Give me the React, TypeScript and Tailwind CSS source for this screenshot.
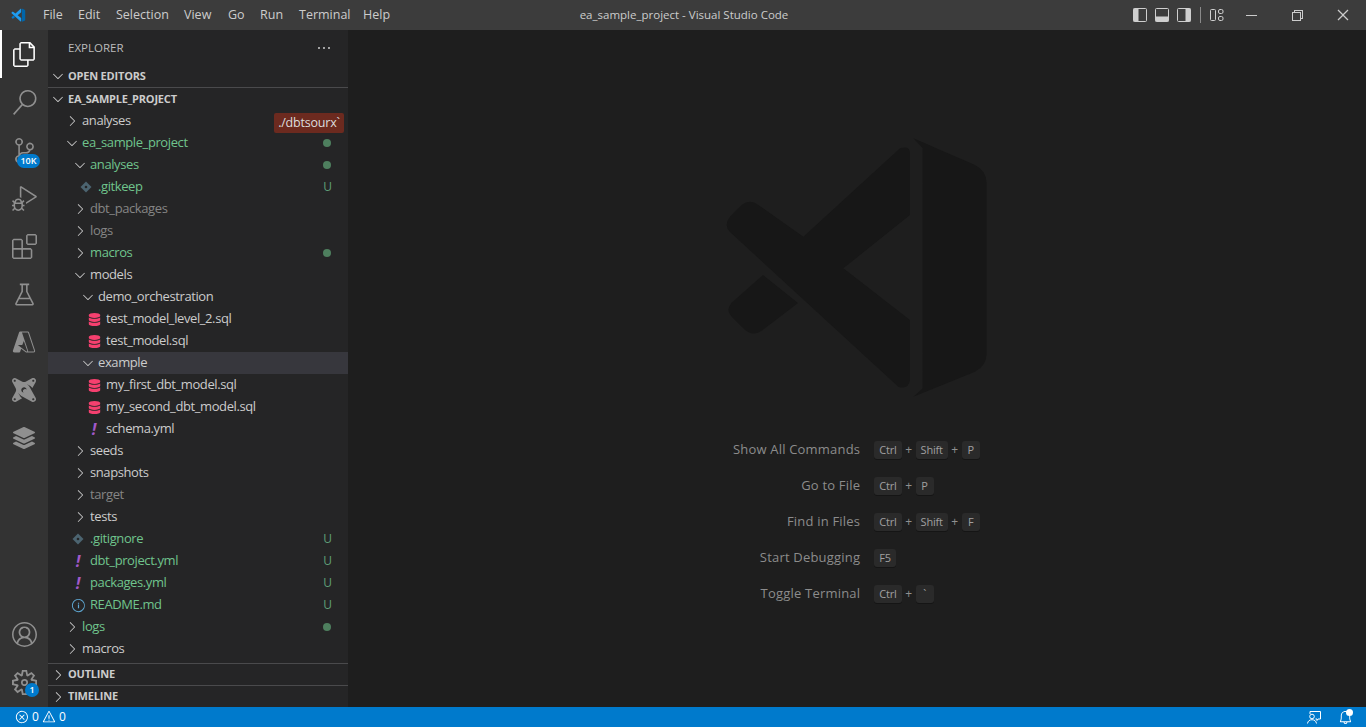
import type { ReactNode } from "react";
import {
  VscAccount,
  VscAzure,
  VscBell,
  VscChevronDown,
  VscChevronRight,
  VscChromeClose,
  VscChromeMinimize,
  VscChromeRestore,
  VscDebugAlt,
  VscEllipsis,
  VscError,
  VscExtensions,
  VscFiles,
  VscInfo,
  VscSearch,
  VscSettingsGear,
  VscSourceControl,
  VscWarning,
  VscBeaker,
} from "react-icons/vsc";
import { FaDatabase, FaLayerGroup } from "react-icons/fa";
import { SiDbt } from "react-icons/si";

type Tone = "plain" | "added" | "ignored";
type Kind = "open" | "closed" | "git" | "sql" | "yml" | "info";
type Badge = "dot" | "U";

interface Row {
  name: string;
  level: number;
  kind: Kind;
  tone?: Tone;
  badge?: Badge;
  selected?: boolean;
}

const rows: Row[] = [
  { name: "analyses", level: 0, kind: "closed" },
  { name: "ea_sample_project", level: 0, kind: "open", tone: "added", badge: "dot" },
  { name: "analyses", level: 1, kind: "open", tone: "added", badge: "dot" },
  { name: ".gitkeep", level: 2, kind: "git", tone: "added", badge: "U" },
  { name: "dbt_packages", level: 1, kind: "closed", tone: "ignored" },
  { name: "logs", level: 1, kind: "closed", tone: "ignored" },
  { name: "macros", level: 1, kind: "closed", tone: "added", badge: "dot" },
  { name: "models", level: 1, kind: "open" },
  { name: "demo_orchestration", level: 2, kind: "open" },
  { name: "test_model_level_2.sql", level: 3, kind: "sql" },
  { name: "test_model.sql", level: 3, kind: "sql" },
  { name: "example", level: 2, kind: "open", selected: true },
  { name: "my_first_dbt_model.sql", level: 3, kind: "sql" },
  { name: "my_second_dbt_model.sql", level: 3, kind: "sql" },
  { name: "schema.yml", level: 3, kind: "yml" },
  { name: "seeds", level: 1, kind: "closed" },
  { name: "snapshots", level: 1, kind: "closed" },
  { name: "target", level: 1, kind: "closed", tone: "ignored" },
  { name: "tests", level: 1, kind: "closed" },
  { name: ".gitignore", level: 1, kind: "git", tone: "added", badge: "U" },
  { name: "dbt_project.yml", level: 1, kind: "yml", tone: "added", badge: "U" },
  { name: "packages.yml", level: 1, kind: "yml", tone: "added", badge: "U" },
  { name: "README.md", level: 1, kind: "info", tone: "added", badge: "U" },
  { name: "logs", level: 0, kind: "closed", tone: "added", badge: "dot" },
  { name: "macros", level: 0, kind: "closed" },
];

const toneClass: Record<Tone, string> = {
  plain: "text-[#cccccc]",
  added: "text-[#70c48d]",
  ignored: "text-[#858585]",
};

const menus = [
  { label: "File", cls: "w-[35px]" },
  { label: "Edit", cls: "w-[38px]" },
  { label: "Selection", cls: "w-[68px]" },
  { label: "View", cls: "w-[44px]" },
  { label: "Go", cls: "w-[32px]" },
  { label: "Run", cls: "w-[39px]" },
  { label: "Terminal", cls: "w-[64px]" },
  { label: "Help", cls: "w-[40px]" },
];

const shortcuts = [
  { label: "Show All Commands", keys: ["Ctrl", "Shift", "P"] },
  { label: "Go to File", keys: ["Ctrl", "P"] },
  { label: "Find in Files", keys: ["Ctrl", "Shift", "F"] },
  { label: "Start Debugging", keys: ["F5"] },
  { label: "Toggle Terminal", keys: ["Ctrl", "`"] },
];

const logoRight = "M640 55 825 135Q860 152 860 190V700Q860 738 825 755L640 830 668 805V85Z";
const logoLeft = "M189 465 294 549 185 632Q160 650 135 630L95 590Q75 570 95 548Z";
const logoMain = "M90 336Q70 315 90 290L125 255Q150 235 175 255L310 350 600 85Q630 75 630 100V285L430 445 630 600V780Q625 810 595 800Z";

const VsLogo = () => (
  <svg viewBox="0 0 960 870" className="h-[16px] w-[17px]">
    <path fill="#0065a9" d={logoRight} />
    <path fill="#007acc" d={logoLeft} />
    <path fill="#1f9cf0" d={logoMain} />
  </svg>
);

const Watermark = () => (
  <svg viewBox="0 0 960 870" className="ml-[6px] h-[290px] w-[320px]">
    <path fill="#171717" d={logoRight} />
    <path fill="#171717" d={logoLeft} />
    <path fill="#171717" d={logoMain} />
  </svg>
);

const GitIcon = () => (
  <svg viewBox="0 0 12 12" className="h-[12px] w-[12px]">
    <path fill="#4c6470" d="M6 .5 11.5 6 6 11.5.5 6Z" />
    <circle cx="6" cy="6" r="1.3" fill="#252526" />
  </svg>
);

const LayoutIcon = ({ side }: { side: "left" | "bottom" | "right" }) => (
  <svg viewBox="0 0 14 14" className="h-[14px] w-[14px]">
    <rect x="0.5" y="0.5" width="13" height="13" rx="1" fill="none" stroke="#cfcfcf" />
    {side === "left" && <rect x="0.5" y="0.5" width="5" height="13" fill="#cfcfcf" />}
    {side === "bottom" && <rect x="0.5" y="8.5" width="13" height="5" fill="#cfcfcf" />}
    {side === "right" && <rect x="8.5" y="0.5" width="5" height="13" fill="#cfcfcf" />}
  </svg>
);

const CustomizeIcon = () => (
  <svg viewBox="0 0 14 14" className="h-[14px] w-[14px]" fill="none" stroke="#cfcfcf">
    <rect x="0.5" y="1.5" width="5" height="11" rx="1" />
    <rect x="8.5" y="1.5" width="4.5" height="4" rx="1.5" />
    <rect x="8.5" y="8.5" width="4.5" height="4" rx="1.5" />
  </svg>
);

const FeedbackIcon = () => (
  <svg viewBox="0 0 16 16" className="h-[16px] w-[16px]" fill="none" stroke="#ffffff" strokeWidth="1">
    <path d="M4 5V2.5h10.5V10H12l-1 1.5V10H9.5" />
    <circle cx="6" cy="7.5" r="2.3" />
    <path d="M1.5 14.500c.4-2.400 2-3.800 4.500-3.800s4.100 1.400 4.500 3.800" />
  </svg>
);

const BellDot = () => (
  <span className="relative flex h-4 w-4 items-center justify-center text-white">
    <VscBell size={15} />
    <span className="absolute right-0 top-0 h-[7px] w-[7px] rounded-full bg-white" />
  </span>
);

const ActivityItem = ({ children, active }: { children: ReactNode; active?: boolean }) => (
  <div
    className={`relative flex h-12 w-12 shrink-0 items-center justify-center ${
      active ? "border-l-2 border-white pr-[2px] text-white" : "text-[#8f8f8f]"
    }`}
  >
    {children}
  </div>
);

const Count = ({ children, cls }: { children: ReactNode; cls: string }) => (
  <span
    className={`absolute flex h-[14px] items-center justify-center rounded-full bg-[#007acc] text-[9px] font-semibold text-white ${cls}`}
  >
    {children}
  </span>
);

const TreeRow = ({ row }: { row: Row }) => {
  const isFolder = row.kind === "open" || row.kind === "closed";
  const tone = toneClass[row.tone ?? "plain"];
  // indent steps by 8px a level, files start 2px further left than folders
  const indent = (isFolder ? 16 : 14) + row.level * 8;
  return (
    <div
      className={`flex h-[22px] shrink-0 items-center pr-4 ${row.selected ? "bg-[#37373d]" : ""}`}
      style={{ paddingLeft: indent }}
    >
      {row.kind === "open" && <VscChevronDown size={16} className="mr-[2px] shrink-0 text-[#c5c5c5]" />}
      {row.kind === "closed" && <VscChevronRight size={16} className="mr-[2px] shrink-0 text-[#c5c5c5]" />}
      {!isFolder && (
        <span className="mr-1 flex h-4 w-4 shrink-0 items-center justify-center">
          {row.kind === "git" && <GitIcon />}
          {row.kind === "sql" && <FaDatabase size={13} className="text-[#f5406f]" />}
          {row.kind === "yml" && <span className="text-[16px] font-bold italic leading-none text-[#a259c9]">!</span>}
          {row.kind === "info" && <VscInfo size={15} className="text-[#5fa8d3]" />}
        </span>
      )}
      <span className={`flex-1 truncate text-[13px] tracking-[-0.4px] ${tone}`}>{row.name}</span>
      {row.badge === "dot" && <span className="mr-[1px] h-2 w-2 rounded-full bg-[#4e7f5e]" />}
      {row.badge === "U" && <span className="text-[12px] text-[#5f9f76]">U</span>}
    </div>
  );
};

const SectionHeader = ({ label, open, cls }: { label: string; open?: boolean; cls: string }) => (
  <div className={`flex shrink-0 items-center pl-[2px] text-[#cccccc] ${cls}`}>
    {open ? <VscChevronDown size={16} className="mr-[2px]" /> : <VscChevronRight size={16} className="mr-[2px]" />}
    <span className="text-[11px] font-bold tracking-[-0.2px]">{label}</span>
  </div>
);

const Shortcut = ({ label, keys }: { label: string; keys: string[] }) => (
  <div className="flex h-9 items-center">
    <span className="w-[136px] text-right text-[13px] tracking-[0.2px] text-[#8c8c8c]">{label}</span>
    <span className="ml-[14px] flex items-center">
      {keys.map((k, i) => (
        <span key={k} className="flex items-center">
          {i > 0 && <span className="w-[14px] text-center text-[12px] text-[#8f8f8f]">+</span>}
          <span className="flex h-[18px] min-w-[18px] items-center justify-center rounded-[3px] bg-[#2a2a2a] px-[5px] text-[11px] tracking-[-0.2px] text-[#a0a0a0] shadow-[0_1px_0_#151515]">
            {k}
          </span>
        </span>
      ))}
    </span>
  </div>
);

export default function App() {
  return (
    <div className="flex h-screen w-full flex-col overflow-hidden bg-[#1e1e1e] font-['Open_Sans',sans-serif]">
      {/* title bar */}
      <div className="relative flex h-[30px] shrink-0 items-center bg-[#3c3c3c] text-[#cccccc]">
        <div className="ml-[10px] mr-[16px] flex">
          <VsLogo />
        </div>
        <div className="flex items-center">
          {menus.map((m) => (
            <span key={m.label} className={`${m.cls} text-[12.5px] text-[#cccccc]`}>
              {m.label}
            </span>
          ))}
        </div>
        <div className="flex-1 pr-[168px] text-center text-[11.5px] text-[#cccccc]">
          ea_sample_project - Visual Studio Code
        </div>
        <div className="flex items-center gap-2">
          <LayoutIcon side="left" />
          <LayoutIcon side="bottom" />
          <LayoutIcon side="right" />
          <span className="mx-[1px] h-4 w-px bg-[#8a8a8a]" />
          <CustomizeIcon />
        </div>
        <div className="ml-[4px] flex items-center">
          <span className="flex h-[30px] w-[46px] items-center justify-center">
            <VscChromeMinimize size={16} />
          </span>
          <span className="flex h-[30px] w-[46px] items-center justify-center">
            <VscChromeRestore size={16} />
          </span>
          <span className="flex h-[30px] w-[46px] items-center justify-center">
            <VscChromeClose size={16} />
          </span>
        </div>
      </div>

      <div className="flex min-h-0 flex-1">
        {/* activity bar */}
        <div className="flex w-12 shrink-0 flex-col bg-[#333333] pb-px">
          <ActivityItem active>
            <VscFiles size={25} />
          </ActivityItem>
          <ActivityItem>
            <VscSearch size={25} />
          </ActivityItem>
          <ActivityItem>
            <VscSourceControl size={25} />
            <Count cls="left-[17px] top-[28px] w-[23px]">10K</Count>
          </ActivityItem>
          <ActivityItem>
            <VscDebugAlt size={25} />
          </ActivityItem>
          <ActivityItem>
            <VscExtensions size={25} />
          </ActivityItem>
          <ActivityItem>
            <VscBeaker size={25} />
          </ActivityItem>
          <ActivityItem>
            <VscAzure size={24} />
          </ActivityItem>
          <ActivityItem>
            <SiDbt size={24} />
          </ActivityItem>
          <ActivityItem>
            <FaLayerGroup size={22} />
          </ActivityItem>
          <div className="mt-auto" />
          <ActivityItem>
            <VscAccount size={25} />
          </ActivityItem>
          <ActivityItem>
            <VscSettingsGear size={25} />
            <Count cls="left-[25px] top-[25px] w-[14px]">1</Count>
          </ActivityItem>
        </div>

        {/* explorer */}
        <div className="relative flex w-[300px] shrink-0 flex-col bg-[#252526]">
          <div className="flex h-[35px] shrink-0 items-center justify-between pl-5 pr-4 pt-px text-[#bbbbbb]">
            <span className="text-[11.5px]">EXPLORER</span>
            <VscEllipsis size={16} className="text-[#cccccc]" />
          </div>
          <SectionHeader label="OPEN EDITORS" open cls="h-[22px]" />
          <SectionHeader label="EA_SAMPLE_PROJECT" open cls="h-[23px] border-t border-[#4a4a4c]" />
          <div className="flex min-h-0 flex-1 flex-col">
            {rows.map((row, i) => (
              <TreeRow key={i} row={row} />
            ))}
          </div>
          <SectionHeader label="OUTLINE" cls="h-[22px] border-t border-[#4a4a4c]" />
          <SectionHeader label="TIMELINE" cls="h-[22px] border-t border-[#4a4a4c]" />
          <div className="absolute left-[226px] top-[83px] flex h-5 w-[70px] items-center justify-center rounded-[2px] bg-[#6c2a1f] text-[12.5px] tracking-[-0.2px] text-[#dddddd]">
            ./dbtsourx`
          </div>
        </div>

        {/* editor watermark */}
        <div className="flex min-w-0 flex-1 flex-col items-center bg-[#1e1e1e] pt-[90px]">
          <Watermark />
          <div className="ml-[-10px] mt-[22px] flex flex-col self-center">
            {shortcuts.map((s) => (
              <Shortcut key={s.label} label={s.label} keys={s.keys} />
            ))}
          </div>
        </div>
      </div>

      {/* status bar */}
      <div className="flex h-5 shrink-0 items-center bg-[#007acc] pl-[15px] pr-[13px] text-[12px] text-white">
        <VscError size={14} />
        <span className="ml-[3px]">0</span>
        <VscWarning size={14} className="ml-[3px]" />
        <span className="ml-[3px]">0</span>
        <span className="ml-auto flex items-center gap-[15px]">
          <FeedbackIcon />
          <BellDot />
        </span>
      </div>
    </div>
  );
}
